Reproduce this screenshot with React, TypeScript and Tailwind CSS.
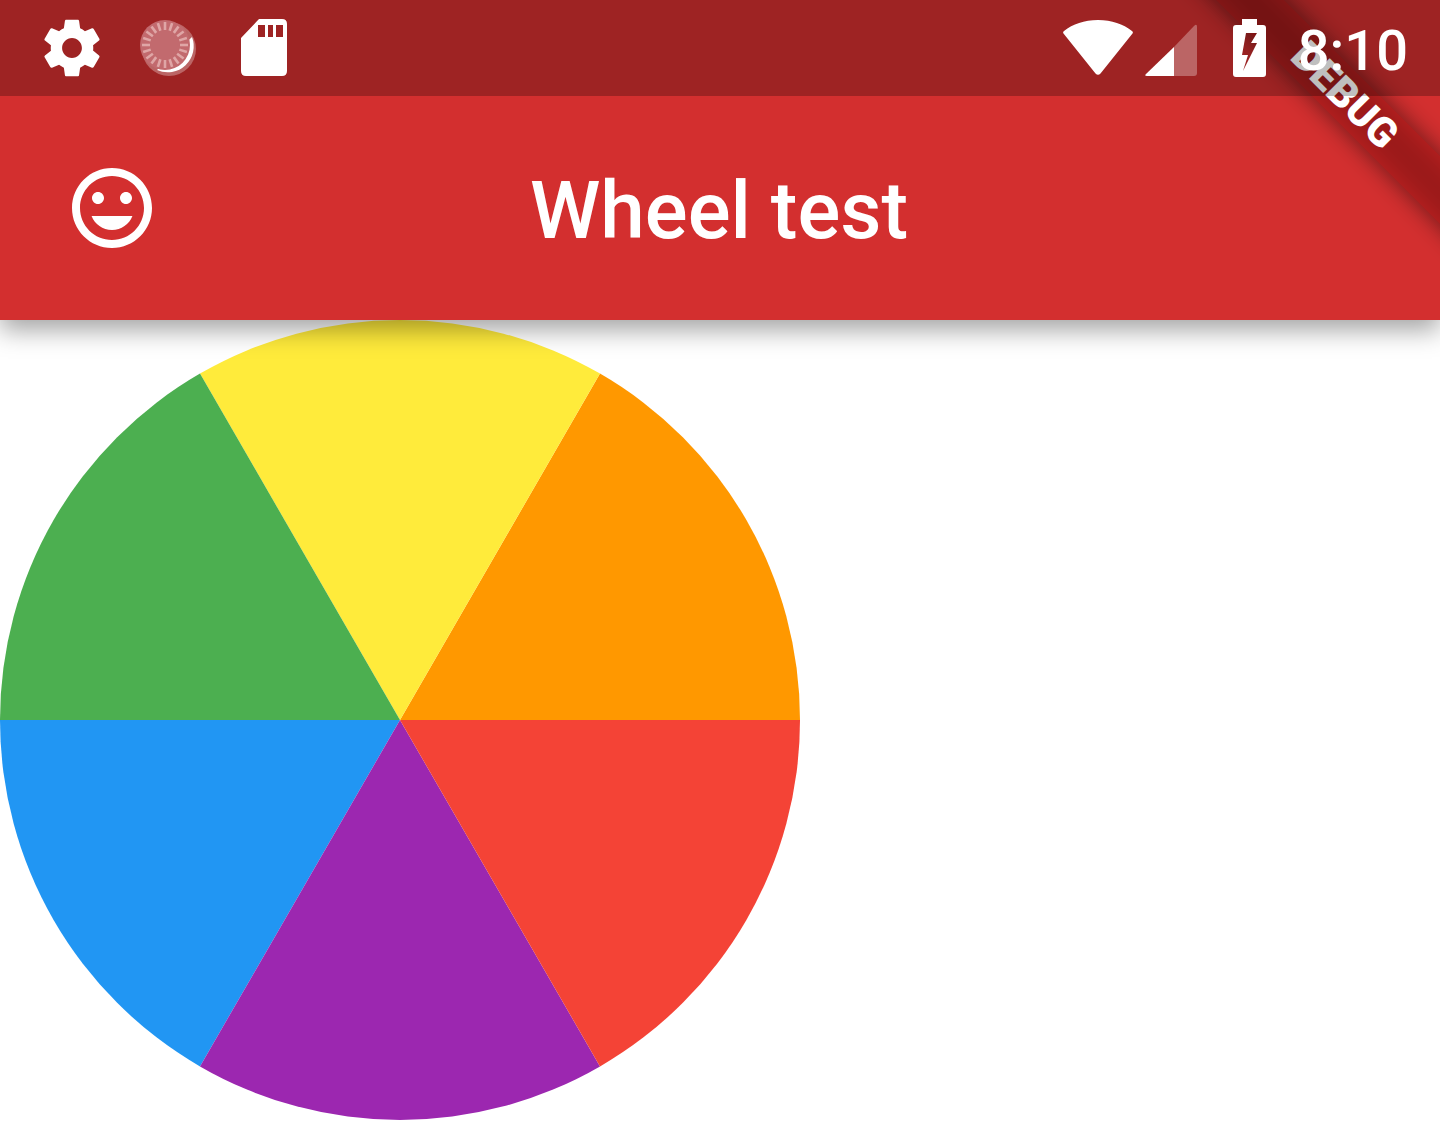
import React from 'react';

const sectors = [
  { color: '#ff9800', d: 'M400 400 L800 400 A400 400 0 0 0 600 53.59 Z' },
  { color: '#ffeb3b', d: 'M400 400 L600 53.59 A400 400 0 0 0 200 53.59 Z' },
  { color: '#4caf50', d: 'M400 400 L200 53.59 A400 400 0 0 0 0 400 Z' },
  { color: '#2196f3', d: 'M400 400 L0 400 A400 400 0 0 0 200 746.41 Z' },
  { color: '#9c27b0', d: 'M400 400 L200 746.41 A400 400 0 0 0 600 746.41 Z' },
  { color: '#f44336', d: 'M400 400 L600 746.41 A400 400 0 0 0 800 400 Z' },
];

const ticks = Array.from({ length: 20 }, (_, i) => i * 18);

const StatusBar: React.FC = () => (
  <div className="absolute top-0 left-0 w-full h-24 bg-black/25 z-30">
    {/* Left icons */}
    <div className="absolute top-0 left-0 flex items-start">
      <svg className="ml-[38px] mt-[14px] w-[68px] h-[68px]" viewBox="0 0 24 24" fill="#fff">
        <path d="M19.43 12.98c.04-.32.07-.64.07-.98s-.03-.66-.07-.98l2.11-1.65c.19-.15.24-.42.12-.64l-2-3.46c-.12-.22-.39-.3-.61-.22l-2.49 1c-.52-.4-1.08-.73-1.69-.98l-.38-2.65C14.46 2.18 14.25 2 14 2h-4c-.25 0-.46.18-.49.42l-.38 2.65c-.61.25-1.17.59-1.69.98l-2.49-1c-.23-.09-.49 0-.61.22l-2 3.46c-.13.22-.07.49.12.64l2.11 1.65c-.04.32-.07.65-.07.98s.03.66.07.98l-2.11 1.65c-.19.15-.24.42-.12.64l2 3.46c.12.22.39.3.61.22l2.49-1c.52.4 1.08.73 1.69.98l.38 2.65c.03.24.24.42.49.42h4c.25 0 .46-.18.49-.42l.38-2.65c.61-.25 1.17-.59 1.69-.98l2.49 1c.23.09.49 0 .61-.22l2-3.46c.12-.22.07-.49-.12-.64l-2.01-1.65zM12 15.5c-1.93 0-3.5-1.57-3.5-3.5s1.57-3.5 3.5-3.5 3.5 1.57 3.5 3.5-1.57 3.5-3.5 3.5z" />
      </svg>
      <svg className="ml-[30px] mt-[14px] w-[66px] h-[68px]" viewBox="0 0 66 68">
        <circle cx="33" cy="35" r="27" fill="#fff" fillOpacity="0.3" />
        <path d="M56 23 A26 26 0 0 1 21 56 Z" fill="#fff" />
        <circle cx="29" cy="31" r="25" fill="#c26a6e" />
        {ticks.map((a) => (
          <line
            key={a}
            x1="29"
            y1="8"
            x2="29"
            y2="16"
            stroke="#dfa6a6"
            strokeWidth="2.6"
            transform={`rotate(${a} 29 31)`}
          />
        ))}
      </svg>
      <svg className="ml-[39px] mt-[19px] w-[46px] h-[57px]" viewBox="0 0 46 57">
        <path
          fillRule="evenodd"
          fill="#fff"
          d="M18 0 H41 Q46 0 46 5 V52 Q46 57 41 57 H5 Q0 57 0 52 V19 Z M17 6 V18 H24 V6 Z M27 6 V18 H32 V6 Z M35 6 V18 H42 V6 Z"
        />
      </svg>
    </div>

    {/* Right icons */}
    <div className="absolute top-0 right-0 flex items-start">
      <svg className="mt-5 w-[70px] h-[55px]" viewBox="0 0 70 55">
        <path
          d="M35 0 C49 0 60 4 69 11 Q70.500 12 69.500 13.500 L37.500 53.500 Q35 56 32.500 53.500 L0.500 13.500 Q-0.500 12 1 11 C10 4 21 0 35 0 Z"
          fill="#fff"
        />
      </svg>
      <svg className="ml-3 mt-6 w-[52px] h-[52px]" viewBox="0 0 52 52">
        <path d="M29 23 L49 2 Q52 -1 52 3 V49 Q52 52 49 52 H29 Z" fill="#fff" fillOpacity="0.3" />
        <path d="M29 23 V52 H2 Q-1 52 1 50 Z" fill="#fff" />
      </svg>
      <svg className="ml-9 mt-[19px] w-[33px] h-[58px]" viewBox="0 0 33 58">
        <path
          fillRule="evenodd"
          fill="#fff"
          d="M9 0 H24 V6 H30 Q33 6 33 9 V55 Q33 58 30 58 H3 Q0 58 0 55 V9 Q0 6 3 6 H9 Z M13 14 L9 36 H15 L10 52 L24 24 H18 L24 14 Z"
        />
      </svg>
      <span className="ml-[32px] mr-[32px] mt-[21px] font-['Roboto',sans-serif] font-medium text-[56px] leading-[60px] text-white">
        8:10
      </span>
    </div>
  </div>
);

const App: React.FC = () => {
  return (
    <div className="relative w-[1440px] h-[1138px] overflow-hidden bg-white font-['Roboto',sans-serif]">
      {/* App bar */}
      <header className="relative z-10 h-80 pt-24 bg-[#d32f2f] shadow-[0_10px_24px_rgba(0,0,0,0.36)] grid grid-cols-[1fr_auto_1fr] items-center">
        <svg className="ml-16 w-24 h-24" viewBox="0 0 24 24" fill="#fff">
          <path d="M11.99 2C6.47 2 2 6.48 2 12s4.47 10 9.99 10C17.52 22 22 17.52 22 12S17.52 2 11.99 2zM12 20c-4.42 0-8-3.58-8-8s3.58-8 8-8 8 3.58 8 8-3.58 8-8 8zm3.5-9c.83 0 1.5-.67 1.5-1.5S16.33 8 15.5 8 14 8.67 14 9.5s.67 1.5 1.5 1.5zm-7 0c.83 0 1.5-.67 1.500-1.500S9.33 8 8.5 8 7 8.67 7 9.5 7.67 11 8.5 11zm3.5 6.500c2.33 0 4.31-1.46 5.11-3.5H6.89c.8 2.04 2.78 3.5 5.11 3.5z" />
        </svg>
        <h1 className="mt-[6px] pr-[2px] text-[80px] leading-none font-medium text-white">Wheel test</h1>
        <div />
      </header>

      {/* Wheel */}
      <svg className="block w-[800px] h-[800px]" viewBox="0 0 800 800">
        {sectors.map((s) => (
          <path key={s.color} d={s.d} fill={s.color} />
        ))}
      </svg>

      {/* Debug banner */}
      <div className="absolute z-20 left-[1045px] top-[71px] w-[600px] h-12 rotate-45 bg-black/50 blur-[12px]" />
      <div className="absolute z-20 left-[1045px] top-[71px] w-[600px] h-12 rotate-45 bg-[#b71c1c]/65 flex items-center justify-center text-white font-black text-[41px] leading-none">
        DEBUG
      </div>

      <StatusBar />
    </div>
  );
};

export default App;
